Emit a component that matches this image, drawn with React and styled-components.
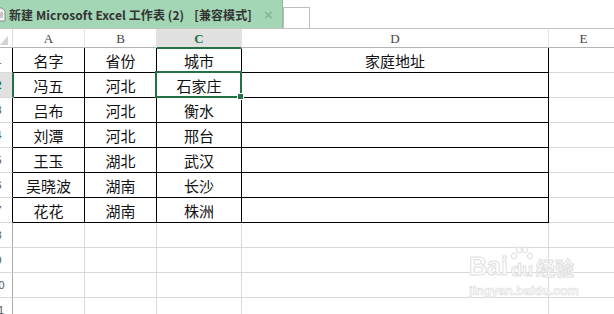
import React from "react";
import styled, { createGlobalStyle, css } from "styled-components";

const GlobalStyle = createGlobalStyle`
  html, body { margin: 0; padding: 0; background: #fff; }
  body { width: 614px; height: 314px; overflow: hidden; }
  #root { width: 614px; height: 314px; overflow: hidden; }
`;

const Page = styled.div`
  position: relative;
  width: 614px;
  height: 314px;
  overflow: hidden;
  background: #fff;
`;

const TopBar = styled.div`
  display: flex;
  align-items: flex-end;
  height: 29px;
  box-sizing: border-box;
  border-bottom: 1px solid #c3c3c3;
`;

const Tab = styled.div`
  display: flex;
  align-items: center;
  width: 283px;
  height: 28px;
  box-sizing: border-box;
  background: #a3d6b4;
  border-right: 1px solid #9ab3a3;
  font-family: "Noto Sans CJK SC", "Liberation Sans", sans-serif;
  font-weight: 700;
  font-size: 12px;
  color: #333;
  white-space: nowrap;
  overflow: hidden;
`;

const DocIcon = styled.svg`
  flex: none;
  margin-left: -6px;
  margin-right: 3px;
`;

const Title = styled.span`
  letter-spacing: 0.1px;
`;

const Gap = styled.span`
  display: inline-block;
  width: ${(p) => p.w}px;
`;

const Close = styled.span`
  margin-left: 12px;
  font-family: "Liberation Sans", sans-serif;
  font-size: 15px;
  font-weight: 700;
  color: #86b898;
`;

const NewTab = styled.div`
  width: 27px;
  height: 21px;
  box-sizing: border-box;
  border: 1px solid #bdbdbd;
  border-bottom: none;
  background: #fff;
`;

const Sheet = styled.div`
  display: grid;
  grid-template-columns: 31px 72px 72px 85px 307px 70px;
  grid-template-rows: 19px;
  grid-auto-rows: 25px;
  margin-left: -18px;
`;

const Cell = styled.div`
  position: relative;
  box-sizing: border-box;
  display: flex;
  align-items: center;
  justify-content: center;
  border-right: 1px solid ${(p) => p.$rc || "#d9d9d9"};
  border-bottom: 1px solid ${(p) => p.$bc || "#d9d9d9"};
  font-family: "Noto Sans CJK SC", "Liberation Sans", sans-serif;
  font-size: 15px;
  color: #111;
  white-space: nowrap;
`;

const Corner = styled(Cell)`
  justify-content: flex-end;
  align-items: flex-end;
  padding: 0 4px 2px 0;
  border-right-color: #d9d9d9;
  border-bottom-color: #b5b5b5;
`;

const ColHead = styled(Cell)`
  font-family: "Liberation Serif", serif;
  font-size: 13px;
  color: #444;
  border-bottom: 1px solid #b5b5b5;
  border-right-color: #e2e2e2;
  padding-top: 1px;
  ${(p) =>
    p.$sel &&
    css`
      background: #e1e1e1;
      color: #217346;
      font-weight: 700;
      border-bottom: 2px solid #217346;
      margin-bottom: -1px;
      height: 20px;
      z-index: 1;
    `}
`;

const RowHead = styled(Cell)`
  font-family: "Liberation Sans", sans-serif;
  font-size: 11px;
  color: #555;
  padding-left: 3px;
  ${(p) =>
    p.$sel &&
    css`
      background: #e1e1e1;
      color: #217346;
      font-weight: 700;
      border-right: 2px solid #217346;
      margin-right: -1px;
      width: 32px;
      z-index: 1;
    `}
`;

const Selected = styled.div`
  position: absolute;
  top: -2px;
  left: -2px;
  right: -1px;
  bottom: -1px;
  border: 2px solid #217346;
  pointer-events: none;
  z-index: 2;
`;

const Handle = styled.div`
  position: absolute;
  right: -4px;
  bottom: -4px;
  width: 5px;
  height: 5px;
  background: #217346;
  border: 1px solid #fff;
`;

const Watermark = styled.div`
  position: absolute;
  left: 469px;
  top: 246px;
  width: 116px;
  display: flex;
  flex-direction: column;
  align-items: flex-start;
  pointer-events: none;
  z-index: 5;
`;

const Logo = styled.div`
  display: flex;
  align-items: flex-end;
  gap: 1px;
`;

const Outline = styled.span`
  font-family: "Liberation Sans", "Noto Sans CJK SC", sans-serif;
  font-weight: 700;
  font-size: ${(p) => p.$size}px;
  line-height: 1;
  color: rgba(255, 255, 255, 0.9);
  -webkit-text-stroke: 1px #e0e0e0;
`;

const Paw = styled.div`
  display: flex;
  flex-direction: column;
  align-items: center;
`;

const Url = styled.span`
  margin-top: 5px;
  font-family: "Liberation Sans", sans-serif;
  font-size: 12.5px;
  font-weight: 700;
  color: rgba(255, 255, 255, 0.9);
  -webkit-text-stroke: 0.7px #e0e0e0;
`;

const cols = ["A", "B", "C", "D", "E"];
const data = [
  ["名字", "省份", "城市", "家庭地址"],
  ["冯五", "河北", "石家庄", ""],
  ["吕布", "河北", "衡水", ""],
  ["刘潭", "河北", "邢台", ""],
  ["王玉", "湖北", "武汉", ""],
  ["吴晓波", "湖南", "长沙", ""],
  ["花花", "湖南", "株洲", ""],
];
const TOTAL_ROWS = 11;

export default function App() {
  const rows = [];
  for (let r = 0; r < TOTAL_ROWS; r++) {
    const inTable = r < data.length;
    const isSelRow = r === 1;
    rows.push(
      <RowHead
        key={`h${r}`}
        $sel={isSelRow}
        $rc={inTable ? "#000" : "#ababab"}
      >
        {r + 1}
      </RowHead>
    );
    for (let c = 0; c < 5; c++) {
      const tableCell = inTable && c < 4;
      const value = tableCell ? data[r][c] : "";
      const sel = r === 1 && c === 2;
      rows.push(
        <Cell
          key={`c${r}-${c}`}
          $rc={inTable && c < 4 ? "#000" : "#d9d9d9"}
          $bc={tableCell ? "#000" : "#d9d9d9"}
        >
          {value}
          {sel && (
            <Selected>
              <Handle />
            </Selected>
          )}
        </Cell>
      );
    }
  }

  return (
    <Page>
      <GlobalStyle />
      <TopBar>
        <Tab>
          <DocIcon width="12" height="15" viewBox="0 0 12 15">
            <path d="M1 1h7l3 3v10H1z" fill="#f4f4f4" stroke="#8a8a8a" />
            <path d="M3 6h6M3 8h6M3 10h6" stroke="#9a9a9a" />
          </DocIcon>
          <Title>
            新建 Microsoft Excel 工作表 (2)
            <Gap w={10} />
            [兼容模式]
          </Title>
          <Close>×</Close>
        </Tab>
        <NewTab />
      </TopBar>
      <Sheet>
        <Corner>
          <svg width="8" height="9" viewBox="0 0 8 9">
            <path d="M8 0V9H0Z" fill="#d3d3d3" />
          </svg>
        </Corner>
        {cols.map((c) => (
          <ColHead key={c} $sel={c === "C"}>
            {c}
          </ColHead>
        ))}
        {rows}
      </Sheet>
      <Watermark>
        <Logo>
          <Outline $size={25}>Bai</Outline>
          <Paw>
            <svg width="26" height="15" viewBox="0 0 26 15">
              <g fill="rgba(255,255,255,0.9)" stroke="#dcdcdc" strokeWidth="1">
                <ellipse cx="5" cy="10" rx="2.5" ry="3" />
                <ellipse cx="10" cy="4" rx="2.5" ry="3" />
                <ellipse cx="16" cy="4" rx="2.5" ry="3" />
                <ellipse cx="21" cy="10" rx="2.5" ry="3" />
              </g>
            </svg>
            <Outline $size={18}>du</Outline>
          </Paw>
          <Outline $size={19}>经验</Outline>
        </Logo>
        <Url>jingyan.baidu.com</Url>
      </Watermark>
    </Page>
  );
}
